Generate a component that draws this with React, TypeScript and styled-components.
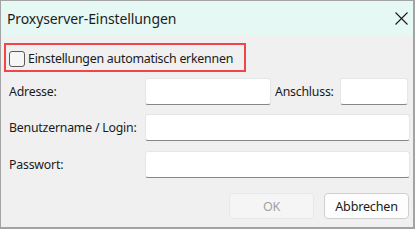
import { createGlobalStyle, styled } from "styled-components";

const GlobalStyle = createGlobalStyle`
  html, body {
    margin: 0;
    padding: 0;
    background: #f0f0f0;
  }
  * {
    box-sizing: border-box;
  }
`;

const Window = styled.div`
  width: 415px;
  height: 229px;
  display: flex;
  flex-direction: column;
  background: #f0f0f0;
  border-left: 1px solid #a3a3a3;
  border-top: 1px solid #a3a3a3;
  border-right: 2px solid #a3a3a3;
  border-bottom: 2px solid #a3a3a3;
  font-family: "Noto Sans", "Open Sans", sans-serif;
  color: #1a1a1a;
`;

const TitleBar = styled.div`
  height: 34px;
  flex: none;
  display: flex;
  align-items: center;
  justify-content: space-between;
  padding: 0 5px 0 6px;
  background: #e6f8f4;
`;

const Title = styled.span`
  font-size: 14px;
  letter-spacing: -0.1px;
  color: #1c1c1c;
`;

const CloseButton = styled.button`
  width: 14px;
  height: 14px;
  padding: 0;
  border: none;
  background: transparent;
  display: flex;
  align-items: center;
  justify-content: center;
`;

const Content = styled.div`
  flex: 1;
  display: flex;
  flex-direction: column;
  padding: 8px 3px 8px 3px;
`;

const Highlight = styled.label`
  align-self: flex-start;
  width: 242px;
  height: 29px;
  display: flex;
  align-items: center;
  gap: 3px;
  padding: 2px 0 0 3px;
  border: 2px solid #f0464b;
  font-size: 12.4px;
  letter-spacing: -0.25px;
  white-space: nowrap;
`;

const CheckBox = styled.span`
  width: 16px;
  height: 16px;
  flex: none;
  border: 1px solid #5a5a5a;
  border-radius: 3px;
  background: #f6f6f6;
`;

const Form = styled.div`
  display: grid;
  grid-template-columns: 136px 1fr;
  align-items: center;
  margin-top: 6px;
  padding-left: 5px;
  font-size: 12.3px;
  letter-spacing: -0.2px;
`;

const Label = styled.span<{ $gap?: number }>`
  white-space: nowrap;
  margin-top: ${(p) => p.$gap ?? 0}px;
`;

const Field = styled.div<{ $gap?: number }>`
  display: flex;
  align-items: center;
  margin-top: ${(p) => p.$gap ?? 0}px;
`;

const Input = styled.input<{ $width?: number }>`
  height: 27px;
  width: ${(p) => (p.$width ? `${p.$width}px` : "100%")};
  flex: ${(p) => (p.$width ? "none" : "1")};
  min-width: 0;
  margin: 0;
  padding: 0 6px;
  background: #ffffff;
  border: 1px solid #e6e6e6;
  border-bottom: 1px solid #868686;
  border-radius: 3px;
  font: inherit;
  outline: none;
`;

const PortLabel = styled.span`
  margin: 0 6px 0 4px;
  white-space: nowrap;
`;

const Buttons = styled.div`
  margin-top: auto;
  display: flex;
  justify-content: flex-end;
  gap: 10px;
  padding-right: 1px;
`;

const Button = styled.button<{ $disabled?: boolean }>`
  width: 85px;
  height: 26px;
  padding: 0;
  border-radius: 4px;
  font-family: inherit;
  font-size: 12.6px;
  letter-spacing: -0.2px;
  border: 1px solid ${(p) => (p.$disabled ? "#e8e8e8" : "#cfcfcf")};
  background: ${(p) => (p.$disabled ? "#f5f5f5" : "#fdfdfd")};
  color: ${(p) => (p.$disabled ? "#a2a2a2" : "#1a1a1a")};
`;

const App = (): JSX.Element => {
  return (
    <>
      <GlobalStyle />
      <Window>
        <TitleBar>
          <Title>Proxyserver-Einstellungen</Title>
          <CloseButton aria-label="Schließen">
            <svg width="13" height="13" viewBox="0 0 13 13">
              <path d="M0.5 0.5 L12.5 12.5 M12.5 0.5 L0.5 12.5" stroke="#1a1a1a" strokeWidth="1.1" />
            </svg>
          </CloseButton>
        </TitleBar>
        <Content>
          <Highlight>
            <CheckBox />
            Einstellungen automatisch erkennen
          </Highlight>
          <Form>
            <Label>Adresse:</Label>
            <Field>
              <Input $width={126} />
              <PortLabel>Anschluss:</PortLabel>
              <Input $width={68} />
            </Field>
            <Label $gap={9}>Benutzername / Login:</Label>
            <Field $gap={9}>
              <Input />
            </Field>
            <Label $gap={10}>Passwort:</Label>
            <Field $gap={10}>
              <Input type="password" />
            </Field>
          </Form>
          <Buttons>
            <Button $disabled disabled>
              OK
            </Button>
            <Button>Abbrechen</Button>
          </Buttons>
        </Content>
      </Window>
    </>
  );
};

export default App;
